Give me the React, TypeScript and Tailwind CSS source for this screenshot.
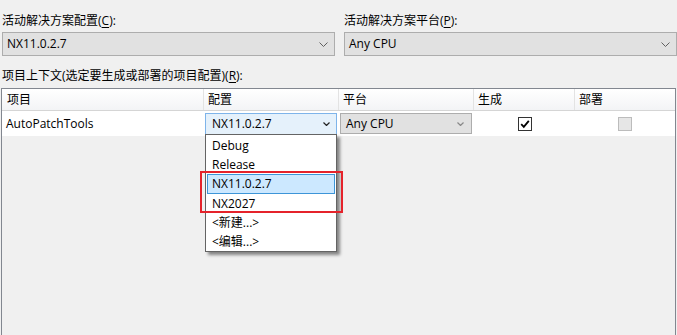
import React from "react";

const Chevron = ({ color = "#606060", w = 9 }: { color?: string; w?: number }) => (
  <svg width={w} height={5} viewBox="0 0 9 5" className="shrink-0">
    <path d="M0.5 0.5 L4.5 4.5 L8.5 0.5" fill="none" stroke={color} strokeWidth="1" />
  </svg>
);

const SmallChevron = ({ color = "#333" }: { color?: string }) => (
  <svg width={7} height={4} viewBox="0 0 7 4" className="shrink-0">
    <path d="M0.5 0.5 L3.5 3.5 L6.5 0.5" fill="none" stroke={color} strokeWidth="1.2" />
  </svg>
);

const Label = ({ text, acc, tail }: { text: string; acc: string; tail: string }) => (
  <div className="leading-[16px] text-[12px] text-black whitespace-nowrap">
    {text}(<span className="underline underline-offset-2">{acc}</span>){tail}
  </div>
);

export default function App() {
  return (
    <div className="relative w-[677px] h-[335px] overflow-hidden bg-[#f0f0f0] font-['Open_Sans','Noto_Sans_CJK_SC',sans-serif] text-[12px] text-black">
      <div className="flex flex-col h-full">
        {/* top comboboxes */}
        <div className="grid grid-cols-[334px_334px] gap-x-[8px] pt-[13px] pl-[2px]">
          <div className="flex flex-col">
            <Label text="活动解决方案配置" acc="C" tail=":" />
            <div className="mt-[3px] h-[24px] w-[333px] border border-[#adadad] bg-[#e1e1e1] flex items-center justify-between pl-[4px] pr-[6px]">
              <span>NX11.0.2.7</span>
              <Chevron />
            </div>
          </div>
          <div className="flex flex-col">
            <Label text="活动解决方案平台" acc="P" tail=":" />
            <div className="mt-[3px] h-[24px] w-[333px] border border-[#adadad] bg-[#e1e1e1] flex items-center justify-between pl-[4px] pr-[6px]">
              <span>Any CPU</span>
              <Chevron />
            </div>
          </div>
        </div>
        <div className="mt-[12px] pl-[2px]">
          <Label text="项目上下文(选定要生成或部署的项目配置)" acc="R" tail=":" />
        </div>

        {/* grid */}
        <div className="mt-[4px] ml-[1px] w-[675px] flex-1 border border-[#828790] border-b-0 bg-[#f0f0f0] flex flex-col">
          {/* header */}
          <div className="flex h-[22px] bg-gradient-to-b from-[#ffffff] to-[#f3f4f6] border-b border-[#d5d5d5]">
            <div className="w-[202px] pl-[5px] flex items-center border-r border-[#e3e3e3]">项目</div>
            <div className="w-[135px] pl-[4px] flex items-center border-r border-[#e3e3e3]">配置</div>
            <div className="w-[135px] pl-[4px] flex items-center border-r border-[#e3e3e3]">平台</div>
            <div className="w-[101px] pl-[4px] flex items-center border-r border-[#e3e3e3]">生成</div>
            <div className="w-[99px] pl-[4px] flex items-center">部署</div>
          </div>
          {/* row */}
          <div className="flex h-[25px] bg-white">
            <div className="w-[202px] pl-[4px] flex items-center">AutoPatchTools</div>
            <div className="w-[135px] flex items-center pl-[1px]">
              <div className="h-[22px] w-[132px] border border-[#7eb4ea] bg-[#e5f1fb] flex items-center justify-between pl-[6px] pr-[6px]">
                <span>NX11.0.2.7</span>
                <SmallChevron color="#222" />
              </div>
            </div>
            <div className="w-[135px] flex items-center pl-[1px]">
              <div className="h-[21px] w-[132px] border border-[#adadad] bg-[#e1e1e1] flex items-center justify-between pl-[5px] pr-[7px]">
                <span>Any CPU</span>
                <SmallChevron color="#888" />
              </div>
            </div>
            <div className="w-[101px] flex items-center justify-center">
              <div className="w-[14px] h-[14px] border border-[#333] bg-white flex items-center justify-center">
                <svg width="10" height="10" viewBox="0 0 10 10">
                  <path d="M1.2 5.2 L3.8 7.8 L8.8 1.8" fill="none" stroke="#000" strokeWidth="1.8" />
                </svg>
              </div>
            </div>
            <div className="w-[99px] flex items-center justify-center">
              <div className="w-[14px] h-[14px] border border-[#bcbcbc] bg-[#e6e6e6]" />
            </div>
          </div>
        </div>
      </div>

      {/* dropdown list */}
      <div className="absolute left-[205px] top-[134px] w-[132px] h-[118px] bg-white border border-[#646464] shadow-[3px_3px_3px_rgba(0,0,0,0.45)] pt-[1px] px-[1px] flex flex-col">
        <div className="h-[19px] flex items-center pl-[5px]">Debug</div>
        <div className="h-[19px] flex items-center pl-[5px]">Release</div>
        <div className="h-[20px] flex items-center pl-[4px] bg-[#cce8ff] border border-[#3d95d8]">NX11.0.2.7</div>
        <div className="h-[19px] flex items-center pl-[5px]">NX2027</div>
        <div className="h-[19px] flex items-center pl-[5px]">&lt;新建...&gt;</div>
        <div className="h-[19px] flex items-center pl-[5px]">&lt;编辑...&gt;</div>
      </div>

      {/* red highlight rectangle */}
      <div className="absolute left-[200px] top-[171px] w-[143px] h-[42px] border-2 border-[#e5232b]" />
    </div>
  );
}
